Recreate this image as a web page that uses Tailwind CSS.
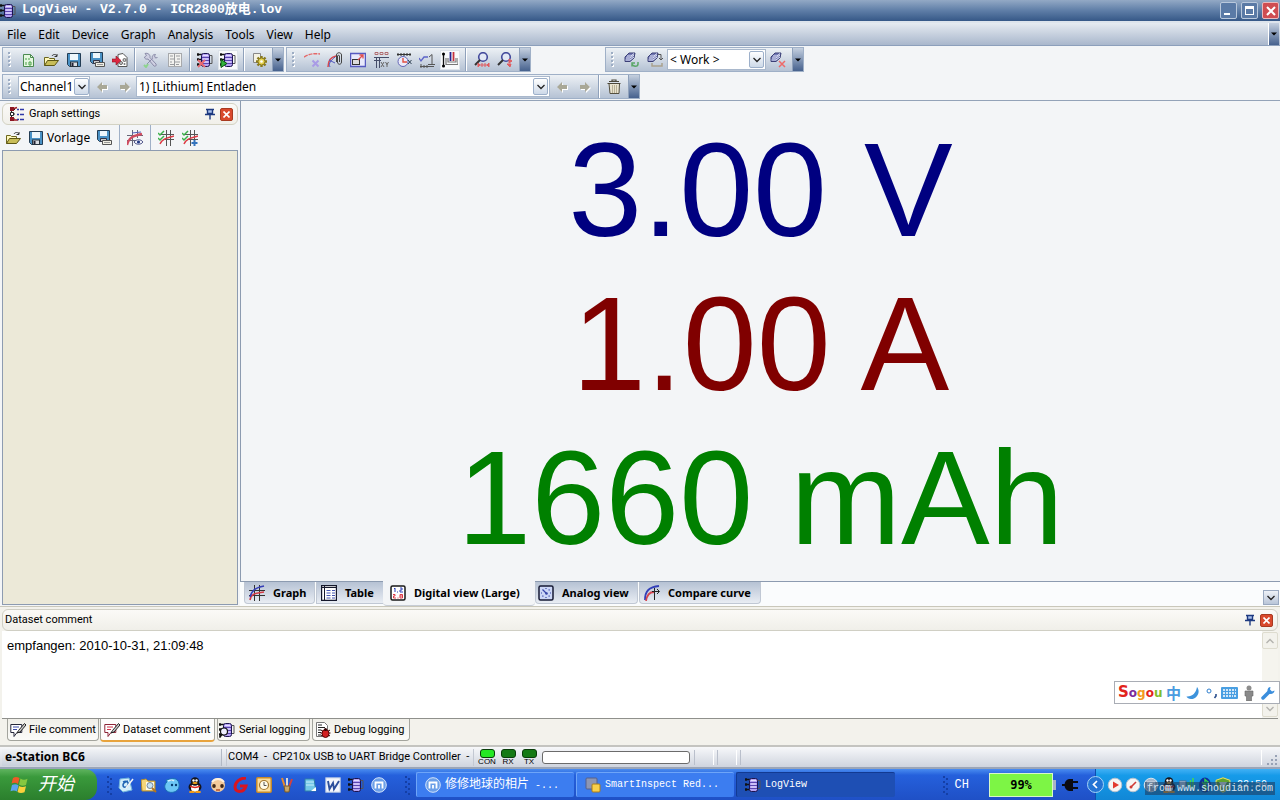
<!DOCTYPE html>
<html lang="en">
<head>
<meta charset="utf-8">
<title>LogView - V2.7.0 - ICR2800放电.lov</title>
<script src="https://cdn.jsdelivr.net/npm/@tailwindcss/browser@4"></script>
</head>
<body class="relative flex h-screen flex-col overflow-hidden bg-[#f3f5f7] font-['Noto_Sans','Noto_Sans_CJK_SC',sans-serif] text-[11px] leading-4 text-black">

<svg class="hidden" aria-hidden="true">
  <symbol id="chip" viewBox="0 0 16 16"><path d="M0 2.500h5M0 7.500h5M0 12.500h5M1 1v3M1 6v3M1 11v3" stroke="#111" stroke-width="1.300"/><path d="M12.500 3.500h2.500v8h-2.500" stroke="#555" fill="none"/><rect x="4.500" y="1.500" width="8" height="13" rx="2" fill="#b5a2f2" stroke="#1c1450"/><path d="M5 5.500h7M5 8.500h7M5 11.500h7" stroke="#5a45b0"/><path d="M6 3.500h5M6 7h5M6 10h5" stroke="#e6dfff"/></symbol>
  <symbol id="new" viewBox="0 0 16 16"><path d="M3.500 2.500h7l3 3v9h-10z" fill="#e5f7e0" stroke="#4b8a50"/><path d="M10.500 2.500v3h3" fill="none" stroke="#4b8a50"/><path d="M6 6v2M9 6v2M6 10v3M9 10h2v3h-2z" stroke="#48a047" fill="none"/></symbol>
  <symbol id="open" viewBox="0 0 16 16"><path d="M1.500 13.500v-8h4l1 1h5v2" fill="#fff8bb" stroke="#6d671f"/><path d="M1.500 13.500l3-5h11l-4 5z" fill="#c8bd58" stroke="#5c5615"/><path d="M9 4c1-2 4-2 5 0m0-2v2.500h-2.500" fill="none" stroke="#333"/></symbol>
  <symbol id="save" viewBox="0 0 16 16"><path d="M1.500 1.500h13v13h-11l-2-2z" fill="#4a92c6" stroke="#233d54"/><rect x="4" y="2" width="8" height="6" fill="#eef7fc"/><rect x="4.500" y="10" width="7" height="4.500" fill="#d9dde2" stroke="#26333d"/><rect x="5.500" y="11" width="2" height="3" fill="#223"/></symbol>
  <symbol id="saveas" viewBox="0 0 16 16"><path d="M1.500 .5h12v11h-10l-2-2z" fill="#4a92c6" stroke="#233d54"/><path d="M4 1h7v5H4z" fill="#eef7fc"/><path d="M4.500 8.500h6v3h-6z" fill="#ccc" stroke="#334"/><path d="M6.500 10.500h9v4h-9z" fill="#f1efe4" stroke="#555"/><path d="M8 12.500h6" stroke="#999"/></symbol>
  <symbol id="export" viewBox="0 0 16 16"><path d="M6 2.500l5-1 4 4v9H6z" fill="#fff" stroke="#555"/><circle cx="9" cy="11" r="1.500" fill="#ccc" stroke="#666"/><circle cx="12.500" cy="8" r="1.500" fill="#ccc" stroke="#666"/><circle cx="12.500" cy="12" r="1" fill="#777"/><path d="M0 7h4V4l5 4.500L4 13v-3H0z" fill="#dc2640" stroke="#8e1020" stroke-width=".6"/></symbol>
  <symbol id="wrench" viewBox="0 0 16 16"><path d="M2 1.500l1.500 2-2 1.500c0 2 2 2.500 3.500 2l6 7c1 1 3-.5 2-2L7 5.500C7.500 3 5 .5 2 1.500zM14.500 5.500l-2 .5-1-2 1-1.500c-2-.5-4 1.500-3 4L4 12" fill="#cfd0e2" stroke="#8a8ba8"/><path d="M1 13l2 2 2-3" stroke="#8ed58e" stroke-width="2" fill="none"/></symbol>
  <symbol id="form" viewBox="0 0 16 16"><rect x="1.500" y="1.500" width="13" height="13" fill="#f2f2ef" stroke="#a7a9ac"/><path d="M3 4h3M9 4h4M3 7h4M10 7h3M3 10h2M8 10h5M3 12.500h4M9 12.500h3M7.500 2v12" stroke="#999b9e"/></symbol>
  <symbol id="chipx" viewBox="0 0 16 16"><use href="#chip"/><path d="M1 8l7 7M8 8l-7 7" stroke="#e86970" stroke-width="1.800"/></symbol>
  <symbol id="chipplay" viewBox="0 0 16 16"><use href="#chip"/><path d="M1 7.500l6 4-6 4z" fill="#31b43c" stroke="#0d5a14"/></symbol>
  <symbol id="gear" viewBox="0 0 16 16"><path d="M1.500 1.500h7v9h-7z" fill="#f4f2e3" stroke="#888"/><path d="M9.500 4v11M4 9.500h11M5.500 5.500l8 8M13.500 5.500l-8 8" stroke="#8a7a1c" stroke-width="2.400"/><circle cx="9.500" cy="9.500" r="3.500" fill="#e5d251" stroke="#8a7a1c"/><circle cx="9.500" cy="9.500" r="1.300" fill="#fff"/></symbol>
  <symbol id="curvex" viewBox="0 0 16 16"><path d="M0 5c5-3 10-4 16-3" fill="none" stroke="#e56868" stroke-width="1.500" stroke-dasharray="4 1"/><path d="M8.500 8.500l6 6M14.500 8.500l-6 6" stroke="#a99be6" stroke-width="2"/></symbol>
  <symbol id="clip" viewBox="0 0 16 16"><path d="M1 15C1 9 4 5 9 4" fill="none" stroke="#d7484f" stroke-width="1.500"/><path d="M3 15c-2-4 1-6 5-10M2 8l6 3" fill="none" stroke="#5258bc"/><path d="M9.500 10V3c0-3 5-3 5 0v7c0 3-4 3-4 0V4c0-1 2-1 2 0v6" fill="none" stroke="#444"/></symbol>
  <symbol id="resize" viewBox="0 0 16 16"><rect x=".5" y="1.500" width="15" height="13" fill="#e8e9fb" stroke="#565ac0" stroke-width="1.500"/><rect x="2.500" y="7.500" width="7" height="5" fill="#ddd" stroke="#333"/><path d="M8 8l5-5M9.500 3H13v3.500" stroke="#e14d4d" fill="none" stroke-width="1.300"/></symbol>
  <symbol id="xy" viewBox="0 0 16 16"><path d="M2 .5h3v2H2zM7 .5h3v2H7zM12 .5h3v2h-3z" fill="none" stroke="#b06d70"/><path d="M1 5.500h15M1 8.500h7M3.500 5v11M6.500 5v11" stroke="#444c68"/><path d="M8 10l3 5M11 10l-3 5M12.500 10l1.500 2.500 1.500-2.500M14 12v3" stroke="#666" fill="none"/></symbol>
  <symbol id="clock" viewBox="0 0 16 16"><path d="M1 2.500h14M2 1v3M5 1v3M8 1v3M11 1v3M14 1v3" stroke="#333"/><circle cx="7" cy="9.500" r="5" fill="#ecebfa" stroke="#6265b5"/><path d="M7 6v4h4" stroke="#e25040" fill="none" stroke-width="1.400"/><path d="M12 8l3.500 4m0-4L12 12" stroke="#345"/></symbol>
  <symbol id="step" viewBox="0 0 16 16"><path d="M10 5l3-2.500V12M9 12.500h7M1 14.500h14M2 12v4M5 13v3M8 13v3" stroke="#555" fill="none"/><path d="M0 6l2 3 3-4h4" stroke="#5c64c8" fill="none" stroke-width="1.300"/></symbol>
  <symbol id="bars" viewBox="0 0 16 16"><path d="M1.500 1v14" stroke="#111" stroke-width="1.300"/><circle cx="1.500" cy="2" r="1.500"/><circle cx="1.500" cy="14" r="1.500"/><path d="M4 6v6.500h12V6M6 6v4h8V6" stroke="#777" fill="none" stroke-width="1.200"/><path d="M8.500 0v9" stroke="#24248f" stroke-width="1.800"/><path d="M11.500 0v9" stroke="#c5303c" stroke-width="1.800"/></symbol>
  <symbol id="zoom1" viewBox="0 0 16 16"><circle cx="9" cy="5" r="4.300" fill="#e2e8f5" stroke="#434a9c" stroke-width="1.600"/><path d="M6 8l-5 5" stroke="#333" stroke-width="2"/><path d="M4 11v4l2-2zM15 11v4l-2-2zM8 11v4M11 11v4M6 13h7" stroke="#e05d61" fill="#e05d61"/></symbol>
  <symbol id="zoom2" viewBox="0 0 16 16"><circle cx="9" cy="5" r="4.300" fill="#e2e8f5" stroke="#434a9c" stroke-width="1.600"/><path d="M6 8l-5 5" stroke="#333" stroke-width="2"/><path d="M12 7l3 2-3 2zM10 12l3 3 1-3z" stroke="#e05d61" fill="#e05d61"/></symbol>
  <symbol id="db" viewBox="0 0 16 16"><path d="M1 5l4-4h6l-1 5-4 3.500H1z" fill="#7278b4" stroke="#3b3f76"/><path d="M3 4h4l3-2.500M2 6h4l4-3M1.500 8H6l4-3" stroke="#dfe3f6" fill="none"/></symbol>
  <symbol id="dbr" viewBox="0 0 16 16"><use href="#db"/><path d="M14 10v2c0 3-5 3-6 0m0 2.500V11h3" stroke="#5ba768" stroke-width="1.500" fill="none"/></symbol>
  <symbol id="dbd" viewBox="0 0 16 16"><use href="#db"/><path d="M11 2.500h3V8m-2-2l2 2 2-2" stroke="#555" fill="none"/><path d="M5 11v3h10v-3" stroke="#aaa28e" stroke-width="1.500" fill="none"/></symbol>
  <symbol id="dbx" viewBox="0 0 16 16"><use href="#db"/><path d="M9 9l6 6M15 9l-6 6" stroke="#ee6a6a" stroke-width="1.500"/></symbol>
  <symbol id="left" viewBox="0 0 12 12"><path d="M1 6l5-5v3h5v4H6v3z" fill="#fff" transform="translate(1 1)"/><path d="M1 6l5-5v3h5v4H6v3z" fill="#a9a897"/></symbol>
  <symbol id="right" viewBox="0 0 12 12"><path d="M11 6L6 1v3H1v4h5v3z" fill="#fff" transform="translate(1 1)"/><path d="M11 6L6 1v3H1v4h5v3z" fill="#a9a897"/></symbol>
  <symbol id="trash" viewBox="0 0 16 16"><path d="M3 4.500h10.500l-.5 10H4z" fill="#e9e3cf" stroke="#55503f"/><path d="M1.500 4.500h13M3 2.500h10M6 2.500V1h4v1.500" fill="none" stroke="#4b4739" stroke-width="1.200"/><path d="M6.500 6v8M10.500 6v8M8.500 6v8" stroke="#b8b094"/></symbol>
  <symbol id="tree" viewBox="0 0 16 16"><path d="M2.500 3v11M2 3.500h4M2 8h4M2 13h4" stroke="#222"/><path d="M1 1h4v4H1zM1 11h4v4H1z" fill="#8d1722"/><path d="M1.500 6.500h3v3h-3z" fill="#fff" stroke="#222"/><path d="M5 2.500l3-1M5 14h4" stroke="#a01d25" stroke-width="1.500"/><path d="M8 3.500h2M11 3.500h4M8 8.500h2M11 8.500h4M8 13.500h2M11 13.500h4" stroke="#3038a8" stroke-width="1.300"/></symbol>
  <symbol id="pin" viewBox="0 0 12 12"><path d="M2 1.500h8M3.500 1.500v4h5v-4M1 6.500h10M6 6.500v5" stroke="#1e3a80" fill="#a9c0ec" stroke-width="1.400"/></symbol>
  <symbol id="curves" viewBox="0 0 16 16"><path d="M0 5.500h16M0 10.500h16M5.500 0v16M10.500 0v16" stroke="#333"/><path d="M1 15C2 9 6 8 15 7" fill="none" stroke="#d63a44" stroke-width="1.600"/><path d="M1 12C3 5 6 3 15 1" fill="none" stroke="#353eb6" stroke-width="1.600"/></symbol>
  <symbol id="eye" viewBox="0 0 16 16"><path d="M0 5.500h16M0 10.500h9M5.500 0v16M10.500 0v8" stroke="#667"/><path d="M0 15C2 7 6 6 15 4" fill="none" stroke="#cf4c60" stroke-width="2.400"/><path d="M5 3l9-1" stroke="#5560b8"/><path d="M7 12c2-3 7-3 9 0-2 3-7 3-9 0z" fill="#f8f8ff" stroke="#4e5588"/><circle cx="11.500" cy="12" r="1.600" fill="#263b85"/></symbol>
  <symbol id="check" viewBox="0 0 16 16"><path d="M3 4.500h13M5 9.500h11M8.500 0v16M12.500 0v16" stroke="#555"/><path d="M2 14c3-6 8-6 14-8" fill="none" stroke="#dd3b45" stroke-width="1.500"/><path d="M0 3l2 2 4-4M0 8l2 2 4-4" fill="none" stroke="#3cb14a" stroke-width="1.500"/></symbol>
  <symbol id="checkp" viewBox="0 0 16 16"><use href="#check"/><path d="M9 10h7v6H9z" fill="#f3f5f8"/><path d="M12.500 10v6M9.500 13h6" stroke="#3474bd" stroke-width="2"/></symbol>
  <symbol id="table" viewBox="0 0 16 16"><path d="M.5 .5h15v15H.5z" fill="#fff" stroke="#15182c" stroke-width="1.400"/><path d="M0 2.500h16M3.500 0v16" stroke="#15182c"/><path d="M5.500 5.500h4M5.500 8h4M5.500 10.500h4M5.500 13h4M11 5.500h3M11 8h3M11 10.500h3M11 13h3" stroke="#4455b0"/></symbol>
  <symbol id="digital" viewBox="0 0 16 16"><rect x="1" y="1" width="14" height="14" rx="1.500" fill="#fff" stroke="#181818" stroke-width="1.500"/><path d="M4 4l1-1v4M7 7h1M10 3h2v2h-2v2h3" fill="none" stroke="#2b3fb8"/><path d="M3 9.500h2v1.500H3.500v2H6M7.500 13h1M10 9.500h2.500V13H10zM10 11h2" fill="none" stroke="#dc3844"/></symbol>
  <symbol id="analog" viewBox="0 0 16 16"><rect x="1" y="1" width="14" height="14" rx="1.500" fill="#ccd7f6" stroke="#161a34" stroke-width="1.500"/><path d="M8 3v1M8 12v1M3 8h1M12 8h1M4.500 4.500l4 4M11.500 4.500l-.8.8M4.500 11.500l.8-.8M11.500 11.500l-.8-.8" stroke="#3746a8" stroke-width="1.200"/><circle cx="8.500" cy="8.500" r="1.300" fill="#3746a8"/></symbol>
  <symbol id="compare" viewBox="0 0 16 16"><path d="M1 15C1 6 5 2 15 1" fill="none" stroke="#3340b8" stroke-width="1.800"/><path d="M2 16c1-7 4-9 8-9" fill="none" stroke="#d34550" stroke-width="1.800"/><path d="M8 6.500h7m-2-2.500l2.500 2.500L13 9M10.500 3v12" stroke="#222" fill="none"/></symbol>
  <symbol id="note" viewBox="0 0 16 16"><path d="M.8 2.500h11v8H7l-3 4v-4H.8z" fill="#fff" stroke="#24263a"/><path d="M3 5h6M3 7.500h4" stroke="#3b4ba8"/><path d="M14.500 1.500l-6 7-1.500 2.500 3-1L16 3z" fill="#ccc" stroke="#222"/></symbol>
  <symbol id="noter" viewBox="0 0 16 16"><path d="M.8 2.500h11v8H7l-3 4v-4H.8z" fill="#fff" stroke="#8c2638"/><path d="M3 5h6M3 7.500h4" stroke="#d0334a"/><path d="M14.500 1.500l-6 7-1.500 2.500 3-1L16 3z" fill="#ccc" stroke="#222"/></symbol>
  <symbol id="serial" viewBox="0 0 16 16"><use href="#chip"/><circle cx="5" cy="9.500" r="3.500" fill="#eef" stroke="#111" stroke-width="1.200"/><path d="M3 12l-2.500 3.500" stroke="#111" stroke-width="1.800"/></symbol>
  <symbol id="debug" viewBox="0 0 16 16"><path d="M1.500 .5h8l3 3v11h-11z" fill="#fff" stroke="#777"/><path d="M3 3h4M3 5.500h7M3 8h3M3 10.500h3M3 13h3" stroke="#222"/><path d="M6 8l9 6M15 8l-9 6M5.500 11h10" stroke="#300"/><ellipse cx="10.500" cy="11.500" rx="3.500" ry="4" fill="#d21f1f" stroke="#500"/><circle cx="10.500" cy="7.500" r="1.500" fill="#300"/></symbol>
  <symbol id="qq" viewBox="0 0 16 16"><ellipse cx="8" cy="10" rx="6.500" ry="5" fill="#15151c"/><ellipse cx="8" cy="11" rx="4" ry="4" fill="#fff"/><circle cx="8" cy="4.500" r="4.300" fill="#15151c"/><circle cx="6.500" cy="3.500" r="1.200" fill="#fff"/><circle cx="9.500" cy="3.500" r="1.200" fill="#fff"/><ellipse cx="8" cy="6" rx="2.600" ry="1" fill="#f5a51b"/><path d="M3 8.500c3 1.500 7 1.500 10 0v1.500c-3 1.500-7 1.500-10 0z" fill="#e2241c"/><ellipse cx="5" cy="15" rx="3" ry="1.200" fill="#f19a1a"/><ellipse cx="11" cy="15" rx="3" ry="1.200" fill="#f19a1a"/></symbol>
  <symbol id="mx" viewBox="0 0 16 16"><circle cx="8" cy="8" r="7.300" fill="#6b9fe8" stroke="#d5e5fb"/><path d="M4.500 11.500v-6h7v6M8 8v3.500" fill="none" stroke="#fff" stroke-width="1.800"/></symbol>
  <symbol id="chev" viewBox="0 0 8 6"><path d="M.5 1l3.500 3.500L7.500 1" fill="none" stroke="#222" stroke-width="1.300"/></symbol>
  <symbol id="tri" viewBox="0 0 6 4"><path d="M0 .5h6L3 3.500z" fill="#000"/></symbol>
  <symbol id="grip" viewBox="0 0 6 16"><path d="M2 1h2v2H2zM2 5h2v2H2zM2 9h2v2H2zM2 13h2v2H2z" fill="#fff"/><path d="M1 0h2v2H1zM1 4h2v2H1zM1 8h2v2H1zM1 12h2v2H1z" fill="#9dadc4"/></symbol>
  <symbol id="tgrip" viewBox="0 0 6 20"><path d="M0 1h2v2H0zM3 3h2v2H3zM0 6h2v2H0zM3 8h2v2H3zM0 11h2v2H0zM3 13h2v2H3zM0 16h2v2H0zM3 18h2v2H3z" fill="#143fa6"/></symbol>
</svg>

<!-- Title bar -->
<header class="flex h-[21px] shrink-0 items-center bg-linear-to-b from-[#93a9c5] via-[#5f7ea7] to-[#365887]">
  <svg class="size-4"><use href="#chip"/></svg>
  <h1 class="-mt-px ml-[6px] grow font-['Liberation_Mono','Noto_Sans_CJK_SC',monospace] text-[13px] leading-4 font-bold whitespace-pre text-white">LogView - V2.7.0 - ICR2800放电.lov</h1>
  <div class="flex gap-1 pr-px">
    <button aria-label="Minimize" class="flex size-[17px] items-end rounded-xs border border-[#b9c8dc] bg-[#5a7aa6] pb-[3px] pl-[3px]"><span class="h-[2px] w-[6px] bg-white"></span></button>
    <button aria-label="Maximize" class="flex size-[17px] items-center justify-center rounded-xs border border-[#b9c8dc] bg-[#5a7aa6]"><span class="h-[9px] w-[9px] border border-t-[3px] border-white"></span></button>
    <button aria-label="Close" class="flex size-[17px] items-center justify-center rounded-xs border border-[#e9b9bd] bg-[#cf4d52]"><svg class="size-[10px]" viewBox="0 0 10 10"><path d="M1 1l8 8M9 1L1 9" stroke="#fff" stroke-width="2"/></svg></button>
  </div>
</header>

<!-- Menu -->
<nav class="flex h-[25px] shrink-0 items-stretch border-t-2 border-b border-t-[#dde4ec] border-b-[#8c9fbb] bg-linear-to-b from-[#e6ebf1] to-[#a9b7cc] text-[12px]">
  <div class="flex grow items-center gap-[12px] pt-px pl-[7px]">
    <button>File</button><button>Edit</button><button>Device</button><button>Graph</button><button>Analysis</button><button>Tools</button><button>View</button><button>Help</button>
  </div>
  <button aria-label="Menu options" class="mr-px flex w-[11px] items-center justify-center border-l border-white bg-linear-to-b from-[#c5d0df] to-[#47628e]"><svg class="h-1 w-[6px]"><use href="#tri"/></svg></button>
</nav>

<!-- Toolbars -->
<section class="flex h-[55px] shrink-0 flex-col border-b border-[#93a3b8]">
  <div class="flex h-[27px] items-start pt-[1px] pl-[2px]">
    <div role="toolbar" aria-label="File" class="flex h-[25px] w-[282px] items-center border border-[#9fb0c7] bg-linear-to-b from-[#edf1f5] to-[#b5c2d4]">
      <svg class="mr-[3px] ml-1 h-4 w-[6px]"><use href="#grip"/></svg>
      <button aria-label="New" class="grid h-full w-[23px] place-items-center"><svg class="size-4"><use href="#new"/></svg></button>
      <button aria-label="Open" class="grid h-full w-[23px] place-items-center"><svg class="size-4"><use href="#open"/></svg></button>
      <button aria-label="Save" class="grid h-full w-[23px] place-items-center"><svg class="size-4"><use href="#save"/></svg></button>
      <button aria-label="Save as" class="grid h-full w-[23px] place-items-center"><svg class="size-4"><use href="#saveas"/></svg></button>
      <button aria-label="Export" class="grid h-full w-[23px] place-items-center"><svg class="size-4"><use href="#export"/></svg></button>
      <i class="mx-[3px] h-full w-[2px] border-r border-l border-l-[#8fa1bb] border-r-white"></i>
      <button aria-label="Device settings" class="grid h-full w-[23px] place-items-center"><svg class="size-4"><use href="#wrench"/></svg></button>
      <button aria-label="Device form" class="grid h-full w-[25px] place-items-center"><svg class="size-4"><use href="#form"/></svg></button>
      <i class="mx-[2px] h-full w-[2px] border-r border-l border-l-[#8fa1bb] border-r-white"></i>
      <button aria-label="Disconnect" class="grid h-full w-[23px] place-items-center"><svg class="size-4"><use href="#chipx"/></svg></button>
      <button aria-label="Connect" class="mx-[2px] grid h-5 w-5 place-items-center border border-[#dde3ea] bg-[#f8fafb]"><svg class="size-4"><use href="#chipplay"/></svg></button>
      <i class="mx-[3px] h-full w-[2px] border-r border-l border-l-[#8fa1bb] border-r-white"></i>
      <button aria-label="Options" class="grid h-full w-[23px] place-items-center"><svg class="size-4"><use href="#gear"/></svg></button>
      <button aria-label="More" class="ml-auto grid h-full w-[11px] place-items-center border-l border-[#8fa1bb] bg-linear-to-b from-[#c5d0df] to-[#47628e]"><svg class="h-1 w-[6px]"><use href="#tri"/></svg></button>
    </div>
    <div role="toolbar" aria-label="Graph" class="ml-[2px] flex h-[25px] w-[245px] items-center border border-[#9fb0c7] bg-linear-to-b from-[#edf1f5] to-[#b5c2d4]">
      <svg class="mr-[3px] ml-1 h-4 w-[6px]"><use href="#grip"/></svg>
      <button aria-label="Remove curve" class="grid h-full w-[23px] place-items-center"><svg class="size-4"><use href="#curvex"/></svg></button>
      <button aria-label="Attach curve" class="grid h-full w-[23px] place-items-center"><svg class="size-4"><use href="#clip"/></svg></button>
      <button aria-label="Resize" class="grid h-full w-[23px] place-items-center"><svg class="size-4"><use href="#resize"/></svg></button>
      <button aria-label="XY table" class="grid h-full w-[23px] place-items-center"><svg class="size-4"><use href="#xy"/></svg></button>
      <button aria-label="Time axis" class="grid h-full w-[23px] place-items-center"><svg class="size-4"><use href="#clock"/></svg></button>
      <button aria-label="Scale" class="grid h-full w-[23px] place-items-center"><svg class="size-4"><use href="#step"/></svg></button>
      <button aria-label="Axes" class="mx-[2px] grid h-5 w-5 place-items-center border border-[#dde3ea] bg-[#f8fafb]"><svg class="size-4"><use href="#bars"/></svg></button>
      <i class="mx-[3px] h-full w-[2px] border-r border-l border-l-[#8fa1bb] border-r-white"></i>
      <button aria-label="Zoom width" class="grid h-full w-[23px] place-items-center"><svg class="size-4"><use href="#zoom1"/></svg></button>
      <button aria-label="Zoom back" class="grid h-full w-[23px] place-items-center"><svg class="size-4"><use href="#zoom2"/></svg></button>
      <button aria-label="More" class="ml-auto grid h-full w-[11px] place-items-center border-l border-[#8fa1bb] bg-linear-to-b from-[#c5d0df] to-[#47628e]"><svg class="h-1 w-[6px]"><use href="#tri"/></svg></button>
    </div>
    <div role="toolbar" aria-label="Desktop" class="ml-[74px] flex h-[25px] w-[199px] items-center border border-[#9fb0c7] bg-linear-to-b from-[#edf1f5] to-[#b5c2d4]">
      <svg class="mr-1 ml-1 h-4 w-[6px]"><use href="#grip"/></svg>
      <button aria-label="Refresh layout" class="grid h-full w-[23px] place-items-center"><svg class="size-4"><use href="#dbr"/></svg></button>
      <button aria-label="Store layout" class="grid h-full w-[24px] place-items-center"><svg class="size-4"><use href="#dbd"/></svg></button>
      <div class="relative h-[21px] w-[99px] border border-[#a9b8cc] bg-white">
        <select aria-label="Layout" class="h-full w-full appearance-none bg-white pl-[2px] text-[12px] leading-4"><option>&lt; Work &gt;</option></select>
        <span class="pointer-events-none absolute top-px right-px grid h-[17px] w-[15px] place-items-center rounded-xs border border-[#9db0ca] bg-linear-to-b from-white to-[#cdd9e8]"><svg class="h-[6px] w-2"><use href="#chev"/></svg></span>
      </div>
      <button aria-label="Delete layout" class="grid h-full w-[23px] place-items-center"><svg class="size-4"><use href="#dbx"/></svg></button>
      <button aria-label="More" class="ml-auto grid h-full w-[11px] place-items-center border-l border-[#8fa1bb] bg-linear-to-b from-[#c5d0df] to-[#47628e]"><svg class="h-1 w-[6px]"><use href="#tri"/></svg></button>
    </div>
  </div>
  <div class="flex h-[27px] items-start pt-px pl-[2px]">
    <div role="toolbar" aria-label="Dataset" class="flex h-[25px] w-[638px] items-center border border-[#9fb0c7] bg-linear-to-b from-[#edf1f5] to-[#b5c2d4]">
      <svg class="mr-[5px] ml-1 h-4 w-[6px]"><use href="#grip"/></svg>
      <div class="relative h-[21px] w-[72px] border border-[#a9b8cc] bg-white">
        <select aria-label="Channel" class="h-full w-full appearance-none bg-white pl-px text-[12px] leading-4"><option>Channel1</option></select>
        <span class="pointer-events-none absolute top-px right-0 grid h-[17px] w-[15px] place-items-center rounded-xs border border-[#9db0ca] bg-linear-to-b from-white to-[#cdd9e8]"><svg class="h-[6px] w-2"><use href="#chev"/></svg></span>
      </div>
      <button aria-label="Previous channel" class="grid h-full w-[23px] place-items-center"><svg class="size-3"><use href="#left"/></svg></button>
      <button aria-label="Next channel" class="grid h-full w-[23px] place-items-center"><svg class="size-3"><use href="#right"/></svg></button>
      <div class="relative h-[21px] w-[414px] border border-[#a9b8cc] bg-white">
        <select aria-label="Dataset" class="h-full w-full appearance-none bg-white pl-[2px] text-[12px] leading-4"><option>1) [Lithium] Entladen</option></select>
        <span class="pointer-events-none absolute top-px right-px grid h-[17px] w-[15px] place-items-center rounded-xs border border-[#9db0ca] bg-linear-to-b from-white to-[#cdd9e8]"><svg class="h-[6px] w-2"><use href="#chev"/></svg></span>
      </div>
      <button aria-label="Previous dataset" class="grid h-full w-[23px] place-items-center"><svg class="size-3"><use href="#left"/></svg></button>
      <button aria-label="Next dataset" class="grid h-full w-[23px] place-items-center"><svg class="size-3"><use href="#right"/></svg></button>
      <i class="mx-[2px] h-full w-[2px] border-r border-l border-l-[#8fa1bb] border-r-white"></i>
      <button aria-label="Delete dataset" class="grid h-full w-[23px] place-items-center"><svg class="size-4"><use href="#trash"/></svg></button>
      <button aria-label="More" class="ml-auto grid h-full w-[11px] place-items-center border-l border-[#8fa1bb] bg-linear-to-b from-[#c5d0df] to-[#47628e]"><svg class="h-1 w-[6px]"><use href="#tri"/></svg></button>
    </div>
  </div>
</section>

<!-- Work area -->
<main class="flex min-h-0 grow">
  <aside class="flex w-[240px] shrink-0 flex-col pt-[2px] pr-[2px] pl-[2px]">
    <div class="flex h-[22px] shrink-0 items-center rounded-md border border-[#d3d2c3] bg-linear-to-b from-[#fbfaf7] to-[#f1f0ea] pl-[6px] pr-1">
      <svg class="size-4"><use href="#tree"/></svg>
      <h2 class="ml-1 grow font-['Roboto',sans-serif]">Graph settings</h2>
      <button aria-label="Pin"><svg class="mr-1 size-3"><use href="#pin"/></svg></button>
      <button aria-label="Close panel" class="grid size-[13px] place-items-center rounded-xs border border-[#a83a20] bg-[#d9492c]"><svg class="size-[7px]" viewBox="0 0 7 7"><path d="M.5 .5l6 6M6.500 .5l-6 6" stroke="#fff" stroke-width="1.600"/></svg></button>
    </div>
    <div class="flex h-[25px] shrink-0 items-center pl-[3px] text-[12px]">
      <button aria-label="Open template"><svg class="size-4"><use href="#open"/></svg></button>
      <button class="ml-[7px] flex items-center gap-[3px]"><svg class="size-4"><use href="#save"/></svg>Vorlage</button>
      <button aria-label="Save template as" class="ml-[6px]"><svg class="size-4"><use href="#saveas"/></svg></button>
      <i class="mx-[7px] h-full w-px bg-[#9fb0c7]"></i>
      <button aria-label="Show curves"><svg class="size-4"><use href="#eye"/></svg></button>
      <i class="mx-[7px] h-full w-px bg-[#9fb0c7]"></i>
      <button aria-label="Check curves"><svg class="size-4"><use href="#check"/></svg></button>
      <button aria-label="Add curves" class="ml-2"><svg class="size-4"><use href="#checkp"/></svg></button>
    </div>
    <div class="mb-px grow border border-[#8d9bb0] bg-[#ece9d8]"></div>
  </aside>
  <section class="flex min-w-0 grow flex-col">
    <div class="grow border-b border-l border-[#8c9bb0] bg-[#f3f5f7] pt-3 text-center font-['Liberation_Sans',sans-serif] text-[133px] leading-[154px] whitespace-nowrap">
      <p class="text-[#000080]">3.00 V</p>
      <p class="text-[#800000]">1.00 A</p>
      <p class="text-[#008000]">1660 mAh</p>
    </div>
    <div role="tablist" class="flex h-[24px] shrink-0 items-start bg-[#fafcfd] pl-[4px] font-bold">
      <button role="tab" class="flex h-[22px] w-[71px] items-center gap-2 rounded-b border border-t-0 border-[#c0c8d4] bg-linear-to-b from-[#b6c2d4] to-[#e9edf3] pl-1"><svg class="size-4"><use href="#curves"/></svg>Graph</button>
      <button role="tab" class="ml-px flex h-[22px] w-[67px] items-center gap-2 border-l border-b border-[#c0c8d4] bg-linear-to-b from-[#b6c2d4] to-[#e9edf3] pl-1"><svg class="size-4"><use href="#table"/></svg>Table</button>
      <button role="tab" aria-selected="true" class="-mt-px flex h-[25px] w-[152px] items-center gap-2 rounded-b border-b border-[#c6ccd5] bg-[#f3f5f7] pl-[7px]"><svg class="size-4"><use href="#digital"/></svg>Digital view (Large)</button>
      <button role="tab" class="flex h-[22px] w-[103px] items-center gap-2 rounded-b border border-t-0 border-[#c0c8d4] bg-linear-to-b from-[#b6c2d4] to-[#e9edf3] pl-[2px]"><svg class="size-4"><use href="#analog"/></svg>Analog view</button>
      <button role="tab" class="ml-px flex h-[22px] w-[122px] items-center gap-2 rounded-b border border-t-0 border-[#c0c8d4] bg-linear-to-b from-[#b6c2d4] to-[#e9edf3] pl-1"><svg class="size-4"><use href="#compare"/></svg>Compare curve</button>
      <button aria-label="Tab list" class="mt-2 mr-px ml-auto grid h-[15px] w-4 place-items-center border border-[#9aa9c0] bg-linear-to-b from-[#eef2f7] to-[#b9c5d8]"><svg class="h-[6px] w-2"><use href="#chev"/></svg></button>
    </div>
  </section>
</main>

<!-- Comment panel -->
<section class="flex h-[139px] shrink-0 flex-col border-t border-[#c9c7ba] bg-[#f3f2ec]">
  <div class="mx-[2px] mt-[2px] flex h-[22px] shrink-0 items-center rounded-md border border-[#d0cfc4] bg-linear-to-b from-[#fbfaf7] to-[#f0efe9] pr-1 pl-[2px]">
    <h2 class="grow font-['Roboto',sans-serif]">Dataset comment</h2>
    <button aria-label="Pin"><svg class="mr-1 size-3"><use href="#pin"/></svg></button>
    <button aria-label="Close panel" class="grid size-[13px] place-items-center rounded-xs border border-[#a83a20] bg-[#d9492c]"><svg class="size-[7px]" viewBox="0 0 7 7"><path d="M.5 .5l6 6M6.500 .5l-6 6" stroke="#fff" stroke-width="1.600"/></svg></button>
  </div>
  <div class="mx-[2px] flex min-h-0 grow border-b border-[#8f908c] bg-white">
    <textarea aria-label="Dataset comment" class="grow resize-none overflow-hidden px-[5px] py-[7px] font-['Liberation_Sans',sans-serif] text-[13px] leading-4 outline-none">empfangen: 2010-10-31, 21:09:48</textarea>
    <div class="flex w-4 flex-col justify-between bg-[#f5f4ee] py-px">
      <button aria-label="Scroll up" class="grid h-[17px] place-items-center rounded-xs border border-[#dedccf] bg-[#f3f2ec]"><svg class="h-[6px] w-2 rotate-180 opacity-30"><use href="#chev"/></svg></button>
      <button aria-label="Scroll down" class="grid h-[17px] place-items-center rounded-xs border border-[#dedccf] bg-[#f3f2ec]"><svg class="h-[6px] w-2 opacity-30"><use href="#chev"/></svg></button>
    </div>
  </div>
  <div role="tablist" class="flex h-[26px] shrink-0 items-start gap-[2px] pl-[7px] font-['Roboto',sans-serif]">
    <button role="tab" class="flex h-[22px] w-[92px] items-center gap-[3px] rounded-b border border-t-0 border-[#a3a49d] bg-linear-to-b from-[#f0efe8] to-[#fbfbf9] pl-[2px] whitespace-nowrap"><svg class="size-4 shrink-0"><use href="#note"/></svg>File comment</button>
    <button role="tab" aria-selected="true" class="-ml-px flex h-[23px] w-[115px] items-center gap-[3px] rounded-b border border-t-0 border-b-2 border-[#a3a49d] border-b-[#e8a33c] bg-[#fdfdfc] pl-[3px] whitespace-nowrap"><svg class="size-4 shrink-0"><use href="#noter"/></svg>Dataset comment</button>
    <button role="tab" class="flex h-[22px] w-[93px] items-center gap-1 rounded-b border border-t-0 border-[#a3a49d] bg-linear-to-b from-[#f0efe8] to-[#fbfbf9] pl-px whitespace-nowrap"><svg class="size-4 shrink-0"><use href="#serial"/></svg>Serial logging</button>
    <button role="tab" class="flex h-[22px] w-[98px] items-center gap-[3px] rounded-b border border-t-0 border-[#a3a49d] bg-linear-to-b from-[#f0efe8] to-[#fbfbf9] pl-[2px] whitespace-nowrap"><svg class="size-4 shrink-0"><use href="#debug"/></svg>Debug logging</button>
  </div>
</section>

<!-- Status bar -->
<footer class="flex h-[24px] shrink-0 items-center border-t-2 border-b-2 border-t-[#c4c4c0] border-b-[#9aa5b8] bg-linear-to-b from-[#f7f8fa] to-[#cfd4de] pl-[2px]">
  <div class="flex h-[17px] w-[220px] shrink-0 items-center border-r border-[#b3b9c5] bg-linear-to-b from-[#f1f3f6] to-[#c9d0dc] pl-[3px] text-[12px] font-bold">e-Station BC6</div>
  <div class="ml-1 flex h-[17px] w-[248px] shrink-0 items-center border-r border-l border-[#c3c8d2] pl-px font-['Roboto',sans-serif] text-[11px] whitespace-pre">COM4  -  CP210x USB to UART Bridge Controller  -</div>
  <div class="ml-[5px] flex gap-[5px] font-['Liberation_Sans',sans-serif] text-[8px] leading-[8px]">
    <div class="flex w-4 flex-col items-center"><span class="h-[9px] w-[15px] shrink-0 rounded-[3px] border border-[#0a3d0a] bg-[#25e825]"></span>CON</div>
    <div class="flex w-4 flex-col items-center"><span class="h-[9px] w-[15px] shrink-0 rounded-[3px] border border-[#0a3d0a] bg-[#157a15]"></span>RX</div>
    <div class="flex w-4 flex-col items-center"><span class="h-[9px] w-[15px] shrink-0 rounded-[3px] border border-[#0a3d0a] bg-[#157a15]"></span>TX</div>
  </div>
  <div role="progressbar" aria-label="Progress" class="ml-[5px] h-[13px] w-[148px] shrink-0 rounded-[3px] border border-[#6b6b6b] bg-white"></div>
  <i class="ml-1 h-[15px] w-5 border-r border-l border-r-white border-l-[#b9bfcb]"></i>
  <i class="ml-[3px] h-[15px] w-5 border-r border-l border-r-white border-l-[#b9bfcb]"></i>
  <i class="ml-[3px] h-[15px] grow border-r border-l border-r-white border-l-[#b9bfcb]"></i>
  <svg class="mr-[2px] ml-1 size-3 self-end" viewBox="0 0 12 12"><path d="M9 0h2v2H9zM5 4h2v2H5zM9 4h2v2H9zM1 8h2v2H1zM5 8h2v2H5zM9 8h2v2H9z" fill="#98a2b5"/></svg>
</footer>

<!-- Windows taskbar -->
<div class="flex h-[31px] shrink-0 items-stretch bg-linear-to-b from-[#4a8cf0] via-[#2560dc] via-20% to-[#1f50c6] font-['Liberation_Mono','Noto_Sans_CJK_SC',monospace] text-white">
  <button class="flex w-[97px] items-center gap-2 rounded-r-xl bg-linear-to-b from-[#5fb45f] via-[#3a9a3c] via-25% to-[#2b7f2d] pl-[10px] text-[18px] italic">
    <svg class="size-5" viewBox="0 0 20 20"><path d="M3 3c2-1.500 4-1.500 6.500 0L8 9C6 7.500 4 7.500 1.500 8.500z" fill="#ee5a28"/><path d="M10.500 3.500c2 1.500 4.500 1.500 7 .3L16 10c-2.500 1-4.500 1-7-.5z" fill="#86c840"/><path d="M1 10c2.500-1.200 4.500-1 6.500.3L6 16.500c-2-1.300-4-1.500-6.500-.3z" fill="#5ba3ee" transform="translate(1)"/><path d="M9 11c2 1.300 4.500 1.500 7 .3l-1.500 6c-2.500 1-5 1-7-.3z" fill="#fbd13c"/></svg>开始</button>
  <svg class="ml-[10px] h-5 w-[6px] self-center"><use href="#tgrip"/></svg>
  <div class="flex w-[286px] items-center gap-[7px] pl-[5px]">
    <button aria-label="Show desktop"><svg class="size-4" viewBox="0 0 16 16"><path d="M2 2l9-1 3 12-9 2-4-4z" fill="#d3eefa" stroke="#6fb4dc"/><path d="M5 5c3-2 6 0 5 3s-5 3-5 0 3-3 5-4" fill="none" stroke="#1e62b2" stroke-width="1.500"/><path d="M15 2l-7 9" stroke="#f4f4f4" stroke-width="1.500"/></svg></button>
    <button aria-label="Explorer"><svg class="size-4" viewBox="0 0 16 16"><path d="M0 3l5-1 2 2h7v10H1z" fill="#f5d67a" stroke="#b08a2e"/><rect x="5" y="5" width="8" height="8" fill="#fffbe8"/><circle cx="9" cy="8.500" r="3" fill="#c7e3f5" stroke="#75869a"/><path d="M11 11l4 4" stroke="#b07422" stroke-width="2"/></svg></button>
    <button aria-label="Messenger"><svg class="size-4" viewBox="0 0 16 16"><path d="M2 3l4-1c6-2 10 2 9 8-1 5-8 7-12 4C0 12 0 7 3 5z" fill="#6cc6f5" stroke="#1a6fb5"/><circle cx="8" cy="8" r="1.200" fill="#083c70"/><circle cx="12" cy="8" r="1.200" fill="#083c70"/><path d="M4 4c2-1 5-1 6 0" stroke="#d5f2ff" stroke-width="1.500"/></svg></button>
    <button aria-label="QQ"><svg class="size-4"><use href="#qq"/></svg></button>
    <button aria-label="Player"><svg class="size-4" viewBox="0 0 16 16"><circle cx="8" cy="8" r="7" fill="#f3c99a"/><path d="M2 5c3-4 9-4 12 0" stroke="#fff2df" stroke-width="2" fill="none"/><ellipse cx="4" cy="9" rx="1.800" ry="2" fill="#402818"/><ellipse cx="12" cy="9" rx="1.800" ry="2" fill="#402818"/><path d="M6 13h4" stroke="#b8502a" stroke-width="1.500"/></svg></button>
    <button aria-label="Browser"><svg class="size-4" viewBox="0 0 16 16"><path d="M13 1C7 1 2 5 2 10c0 6 9 6 11-1H7" fill="none" stroke="#d9151f" stroke-width="3"/></svg></button>
    <button aria-label="Outlook"><svg class="size-4" viewBox="0 0 16 16"><rect x=".8" y=".8" width="14.400" height="14.400" rx="1" fill="#f9dd9e" stroke="#c88a28" stroke-width="1.500"/><circle cx="8" cy="8" r="4.500" fill="#fffbe9" stroke="#a3762c" stroke-width="1.200"/><path d="M8 5v3.500h2.500" fill="none" stroke="#555"/></svg></button>
    <button aria-label="Paint"><svg class="size-4" viewBox="0 0 16 16"><path d="M3 1l3 9" stroke="#e98a2c" stroke-width="2"/><path d="M8 1v9" stroke="#d9d9d9" stroke-width="2"/><path d="M13 2l-3 8" stroke="#d6413b" stroke-width="2"/><path d="M5 9h6l-1 6H6z" fill="#c7a466" stroke="#7a5a26"/></svg></button>
    <button aria-label="Notebook"><svg class="size-4" viewBox="0 0 16 16"><path d="M3 2h9l2 12H3z" fill="#74c8e8" stroke="#2e7fa8"/><path d="M4 5h8M4 8h8" stroke="#c7effb"/><path d="M9 14l5-4v4z" fill="#fff"/></svg></button>
    <button aria-label="Word"><svg class="size-4" viewBox="0 0 16 16"><rect x=".8" y=".8" width="14.400" height="14.400" fill="#f5f8fd" stroke="#b5c6e2"/><path d="M3 4l1.500 8L8 6l1 6 5-8" fill="none" stroke="#2c4f9c" stroke-width="1.900"/></svg></button>
    <button aria-label="LogView shortcut"><svg class="size-4"><use href="#chip"/></svg></button>
    <button aria-label="Maxthon"><svg class="size-4"><use href="#mx"/></svg></button>
  </div>
  <svg class="ml-[6px] h-5 w-[6px] self-center"><use href="#tgrip"/></svg>
  <div class="flex min-w-0 grow items-center gap-[2px] pl-[5px] text-[10px]">
    <button class="flex h-[25px] w-[158px] items-center gap-1 rounded-xs border-t border-l border-[#6ea5f8] bg-[#3c7df0] pl-[8px] whitespace-pre"><svg class="size-4"><use href="#mx"/></svg><span><span class="text-[12px]">修修地球的相片</span> -...</span></button>
    <button class="flex h-[25px] w-[158px] items-center gap-1 rounded-xs border-t border-l border-[#6ea5f8] bg-[#3c7df0] pl-[8px] whitespace-pre"><svg class="size-4" viewBox="0 0 16 16"><rect x="1" y="1" width="11" height="11" rx="1" fill="#8c96b4" stroke="#56618a"/><rect x="7" y="7" width="8" height="8" rx="1" fill="#f7cf4b" stroke="#a87d1c"/></svg>SmartInspect Red...</button>
    <button class="flex h-[25px] w-[159px] items-center gap-1 rounded-xs border-t border-l border-[#123a92] bg-[#1e4fb4] pl-[8px] whitespace-pre"><svg class="size-4"><use href="#chip"/></svg>LogView</button>
  </div>
  <svg class="h-5 w-[6px] self-center"><use href="#tgrip"/></svg>
  <span class="ml-[6px] self-center text-[12px]">CH</span>
  <div class="ml-[20px] flex items-center">
    <div class="grid h-[24px] w-[64px] place-items-center border border-[#d9f7c9] bg-[#7df545] font-['DejaVu_Sans_Mono',monospace] text-[12px] font-bold text-black">99%</div>
    <i class="h-[10px] w-[3px] bg-[#aab4c6]"></i>
    <svg class="ml-[6px] h-[14px] w-4" viewBox="0 0 16 14"><path d="M0 7h4M10 4h6M10 10h6" stroke="#0b0b12" stroke-width="2"/><path d="M11 1v12H7C1 12 1 2 7 1z" fill="#0b0b12"/></svg>
  </div>
  <div class="ml-[17px] flex w-[185px] items-center gap-[2px] border-l border-[#0d4fae] bg-linear-to-b from-[#3fb1f5] via-[#169be9] via-20% to-[#1187d6]">
    <button aria-label="Show hidden icons" class="-ml-[9px] grid size-[17px] shrink-0 place-items-center rounded-full border border-[#a6d4f7] bg-[#2474d4]"><svg class="size-[9px]" viewBox="0 0 9 9"><path d="M6 1L2.500 4.500 6 8" fill="none" stroke="#fff" stroke-width="1.700"/></svg></button>
    <svg class="ml-px size-4 shrink-0" viewBox="0 0 16 16"><circle cx="8" cy="8" r="6.800" fill="#f5f5f5" stroke="#b8c4d0"/><path d="M6 4.500l6 3.500-6 3.500z" fill="#e23a30"/></svg>
    <svg class="size-4 shrink-0" viewBox="0 0 16 16"><circle cx="8" cy="8" r="6.800" fill="#f5f5f5" stroke="#b8c4d0"/><path d="M6 10l5-5" stroke="#d03a35" stroke-width="1.600"/><circle cx="6" cy="10" r="1.500" fill="#d03a35"/></svg>
    <svg class="size-4 shrink-0" viewBox="0 0 16 16"><circle cx="8" cy="8" r="6.800" fill="#a8b6c8" stroke="#dde6ef"/><path d="M4.500 11V5.500h7V11M7 8h3v3" stroke="#fff" stroke-width="1.300" fill="none"/></svg>
    <svg class="size-4 shrink-0"><use href="#qq"/></svg>
    <svg class="size-4 shrink-0" viewBox="0 0 16 16"><rect x="0" y="4" width="7" height="6" fill="#bfd3e6" stroke="#56708e"/><path d="M9 5v4M11.500 3v8M14 1v12" stroke="#47d84b" stroke-width="1.500"/></svg>
    <svg class="size-4 shrink-0" viewBox="0 0 16 16"><ellipse cx="8" cy="8" rx="6" ry="7.500" fill="#0c2f9e"/><path d="M5 5l6 6-3 2.500v-11L11 5l-6 6" fill="none" stroke="#35d34c" stroke-width="1.400"/></svg>
    <svg class="size-4 shrink-0" viewBox="0 0 16 16"><path d="M8 .8l7 2.500c0 6-2 10-7 12C3 13.300 1 9.300 1 3.300z" fill="#5fa22f" stroke="#f3e35a"/><path d="M4 5h8l-4 7z" fill="#f2f8ea"/></svg>
    <time class="ml-1 text-[10px]">22:50</time>
  </div>
</div>

<!-- Input method bar floating over the desktop -->
<div class="absolute right-0 bottom-[96px] flex h-[23px] w-[166px] items-center gap-[2px] border border-[#a9adb5] bg-white pl-[3px] text-[#4a9be0]">
  <span class="w-[46px] font-['DejaVu_Sans',sans-serif] text-[15px] leading-4 font-bold"><span class="text-[#e2231a]">S</span><span class="text-[12px]"><span class="text-[#7b2c9c]">o</span><span class="text-[#f39a1d]">g</span><span class="text-[#e2231a]">o</span><span class="text-[#82bd2c]">u</span></span></span>
  <span class="font-['Noto_Sans_CJK_SC',sans-serif] text-[15px] leading-4 font-bold">中</span>
  <svg class="ml-[3px] size-[14px]" viewBox="0 0 14 14"><path d="M11 1c4 5 0 12-6 12-2 0-4-1-4.500-2.500C6 11 10 7 11 1z" fill="#3d93dc"/></svg>
  <svg class="ml-1 h-[14px] w-[13px]" viewBox="0 0 13 14"><circle cx="3" cy="5" r="2" fill="none" stroke="#2f7fce"/><path d="M10 8v2l-1.500 2" stroke="#2b4f8e" stroke-width="1.600" fill="none"/></svg>
  <svg class="h-3 w-[17px]" viewBox="0 0 17 12"><rect width="17" height="12" rx="1" fill="#4a9fe2"/><path d="M2 3h13M2 6h13M2 9h2M5 9h7M13 9h2" stroke="#fff" stroke-width="1.300" stroke-dasharray="2 1"/></svg>
  <svg class="ml-[3px] h-4 w-3" viewBox="0 0 12 16"><circle cx="6" cy="3" r="2.500" fill="#8d8d8d"/><path d="M2 6h8v5H8.500v5h-5v-5H2z" fill="#8a8a8a" stroke="#666" stroke-width=".6"/></svg>
  <svg class="ml-[4px] size-[14px] shrink-0" viewBox="0 0 14 14"><path d="M2 12l6-6" stroke="#3b8edc" stroke-width="3.500" stroke-linecap="round"/><path d="M9.500 1C6.500 1 5.500 5 7.500 7s6 .5 6-2.500l-2.500 1-2-2z" fill="#3b8edc"/></svg>
</div>

<!-- Watermark -->
<div class="absolute right-[5px] bottom-[5px] h-[13px] w-[130px] bg-[#1c3c60]/60 text-center font-['Liberation_Mono',monospace] text-[10px] leading-[13px] whitespace-nowrap text-[#d5e4f2]">from www.shoudian.com</div>
</body>
</html>
